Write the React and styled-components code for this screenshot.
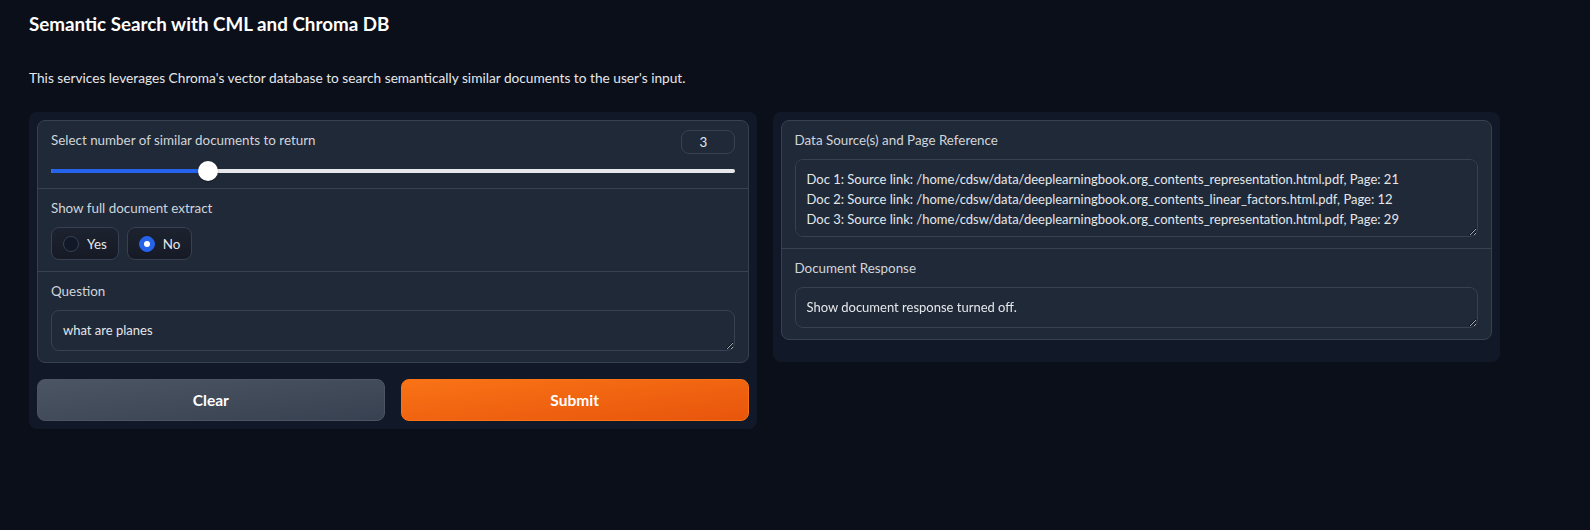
import React from 'react';
import styled, { createGlobalStyle } from 'styled-components';

const GlobalStyle = createGlobalStyle`
  html, body {
    margin: 0;
    background: #0b0f19;
    color-scheme: dark;
  }
  body {
    font-family: Lato, "Noto Sans", sans-serif;
  }
`;

const Page = styled.div`
  padding: 12px 90px 40px 29px;
`;

const Title = styled.h3`
  margin: 0;
  font-size: 18.8px;
  line-height: 24px;
  font-weight: 700;
  color: #ffffff;
`;

const Intro = styled.p`
  margin: 32px 0 24px;
  font-size: 13.7px;
  line-height: 20px;
  color: #e5e7eb;
`;

const Row = styled.div`
  display: flex;
  gap: 16px;
  align-items: flex-start;
`;

const Panel = styled.div`
  flex: 1;
  min-width: 0;
  background: #111827;
  border-radius: 8px;
  padding: 8px 8px ${p => p.$bottom || 8}px;
  display: flex;
  flex-direction: column;
  gap: 16px;
`;

const Form = styled.div`
  border: 1px solid #374151;
  border-radius: 8px;
  background: #1f2937;
  overflow: hidden;
`;

const Section = styled.div`
  padding: 9px 13px ${p => p.$bottom ?? 11}px;
  & + & {
    border-top: 1px solid #374151;
  }
`;

const Label = styled.div`
  font-size: 13.4px;
  line-height: 20px;
  color: #d1d5db;
  margin-bottom: 9px;
`;

const SliderHead = styled.div`
  display: flex;
  align-items: center;
  justify-content: space-between;
  height: 24px;

  ${Label} {
    margin-bottom: 0;
    align-self: flex-start;
  }
`;

const NumberBox = styled.div`
  width: 54px;
  height: 24px;
  box-sizing: border-box;
  border: 1px solid #374151;
  border-radius: 8px;
  padding-left: 18px;
  font-size: 13.4px;
  line-height: 22px;
  color: #e5e7eb;
`;

const SliderWrap = styled.div`
  position: relative;
  height: 20px;
  margin-top: 7px;
`;

const Track = styled.div`
  position: absolute;
  left: 0;
  right: 0;
  top: 8px;
  height: 4px;
  border-radius: 2px;
  background: #e5e7eb;
`;

const Fill = styled.div`
  height: 100%;
  border-radius: 2px;
  background: #2563eb;
`;

const Thumb = styled.div`
  position: absolute;
  top: 0;
  width: 20px;
  height: 20px;
  margin-left: -10px;
  border-radius: 50%;
  background: #ffffff;
  box-shadow: 0 1px 2px rgba(0, 0, 0, 0.3);
`;

const Radios = styled.div`
  display: flex;
  gap: 8px;
`;

const RadioItem = styled.label`
  display: flex;
  align-items: center;
  gap: 8px;
  height: 33px;
  box-sizing: border-box;
  padding: 0 11px;
  border: 1px solid #374151;
  border-radius: 8px;
  background: linear-gradient(#1d2230, #151a25);
  font-size: 13.4px;
  color: #e5e7eb;
`;

const Dot = styled.span`
  width: 16px;
  height: 16px;
  box-sizing: border-box;
  border-radius: 50%;
  border: 1px solid ${p => (p.$on ? '#2563eb' : '#374151')};
  background: ${p => (p.$on ? '#2563eb' : '#111827')};
  display: flex;
  align-items: center;
  justify-content: center;

  &::after {
    content: '';
    display: ${p => (p.$on ? 'block' : 'none')};
    width: 6px;
    height: 6px;
    border-radius: 50%;
    background: #ffffff;
  }
`;

const TextBox = styled.textarea`
  display: block;
  width: 100%;
  height: ${p => p.$h}px;
  box-sizing: border-box;
  margin: 0;
  padding: 9px 11px;
  border: 1px solid #374151;
  border-radius: 8px;
  background: #1f2937;
  color: #e5e7eb;
  font-family: Lato, "Noto Sans", sans-serif;
  font-size: 13px;
  line-height: 20px;
  resize: vertical;
  outline: none;
`;

const Buttons = styled.div`
  display: flex;
  gap: 16px;
`;

const Button = styled.button`
  flex: 1;
  height: 42px;
  border-radius: 8px;
  font-family: Lato, "Noto Sans", sans-serif;
  font-size: 15.5px;
  font-weight: 700;
  color: #ffffff;
  cursor: pointer;
  border: 1px solid ${p => (p.$primary ? '#f97316' : '#4b5563')};
  background: ${p =>
    p.$primary
      ? 'linear-gradient(to bottom right, #f97316, #e8550c)'
      : 'linear-gradient(to bottom right, #4b5563, #374151)'};
`;

const SOURCES = [
  'Doc 1: Source link: /home/cdsw/data/deeplearningbook.org_contents_representation.html.pdf, Page: 21',
  'Doc 2: Source link: /home/cdsw/data/deeplearningbook.org_contents_linear_factors.html.pdf, Page: 12',
  'Doc 3: Source link: /home/cdsw/data/deeplearningbook.org_contents_representation.html.pdf, Page: 29',
].join('\n');

const Slider = ({ value, min, max }) => {
  const frac = (value - min) / (max - min);
  const pos = `calc(10px + ${frac} * (100% - 20px))`;
  return (
    <SliderWrap>
      <Track>
        <Fill style={{ width: pos }} />
      </Track>
      <Thumb style={{ left: pos }} />
    </SliderWrap>
  );
};

export default function App() {
  return (
    <Page>
      <GlobalStyle />
      <Title>Semantic Search with CML and Chroma DB</Title>
      <Intro>
        This services leverages Chroma's vector database to search semantically similar documents to the user's input.
      </Intro>
      <Row>
        <Panel>
          <Form>
            <Section $bottom={7}>
              <SliderHead>
                <Label>Select number of similar documents to return</Label>
                <NumberBox>3</NumberBox>
              </SliderHead>
              <Slider value={3} min={1} max={10} />
            </Section>
            <Section>
              <Label>Show full document extract</Label>
              <Radios>
                <RadioItem><Dot />Yes</RadioItem>
                <RadioItem><Dot $on />No</RadioItem>
              </Radios>
            </Section>
            <Section>
              <Label>Question</Label>
              <TextBox $h={41} rows={1} readOnly value="what are planes" />
            </Section>
          </Form>
          <Buttons>
            <Button>Clear</Button>
            <Button $primary>Submit</Button>
          </Buttons>
        </Panel>
        <Panel $bottom={22}>
          <Form>
            <Section>
              <Label>Data Source(s) and Page Reference</Label>
              <TextBox $h={78} rows={3} readOnly value={SOURCES} />
            </Section>
            <Section>
              <Label>Document Response</Label>
              <TextBox $h={41} rows={1} readOnly value="Show document response turned off." />
            </Section>
          </Form>
        </Panel>
      </Row>
    </Page>
  );
}
